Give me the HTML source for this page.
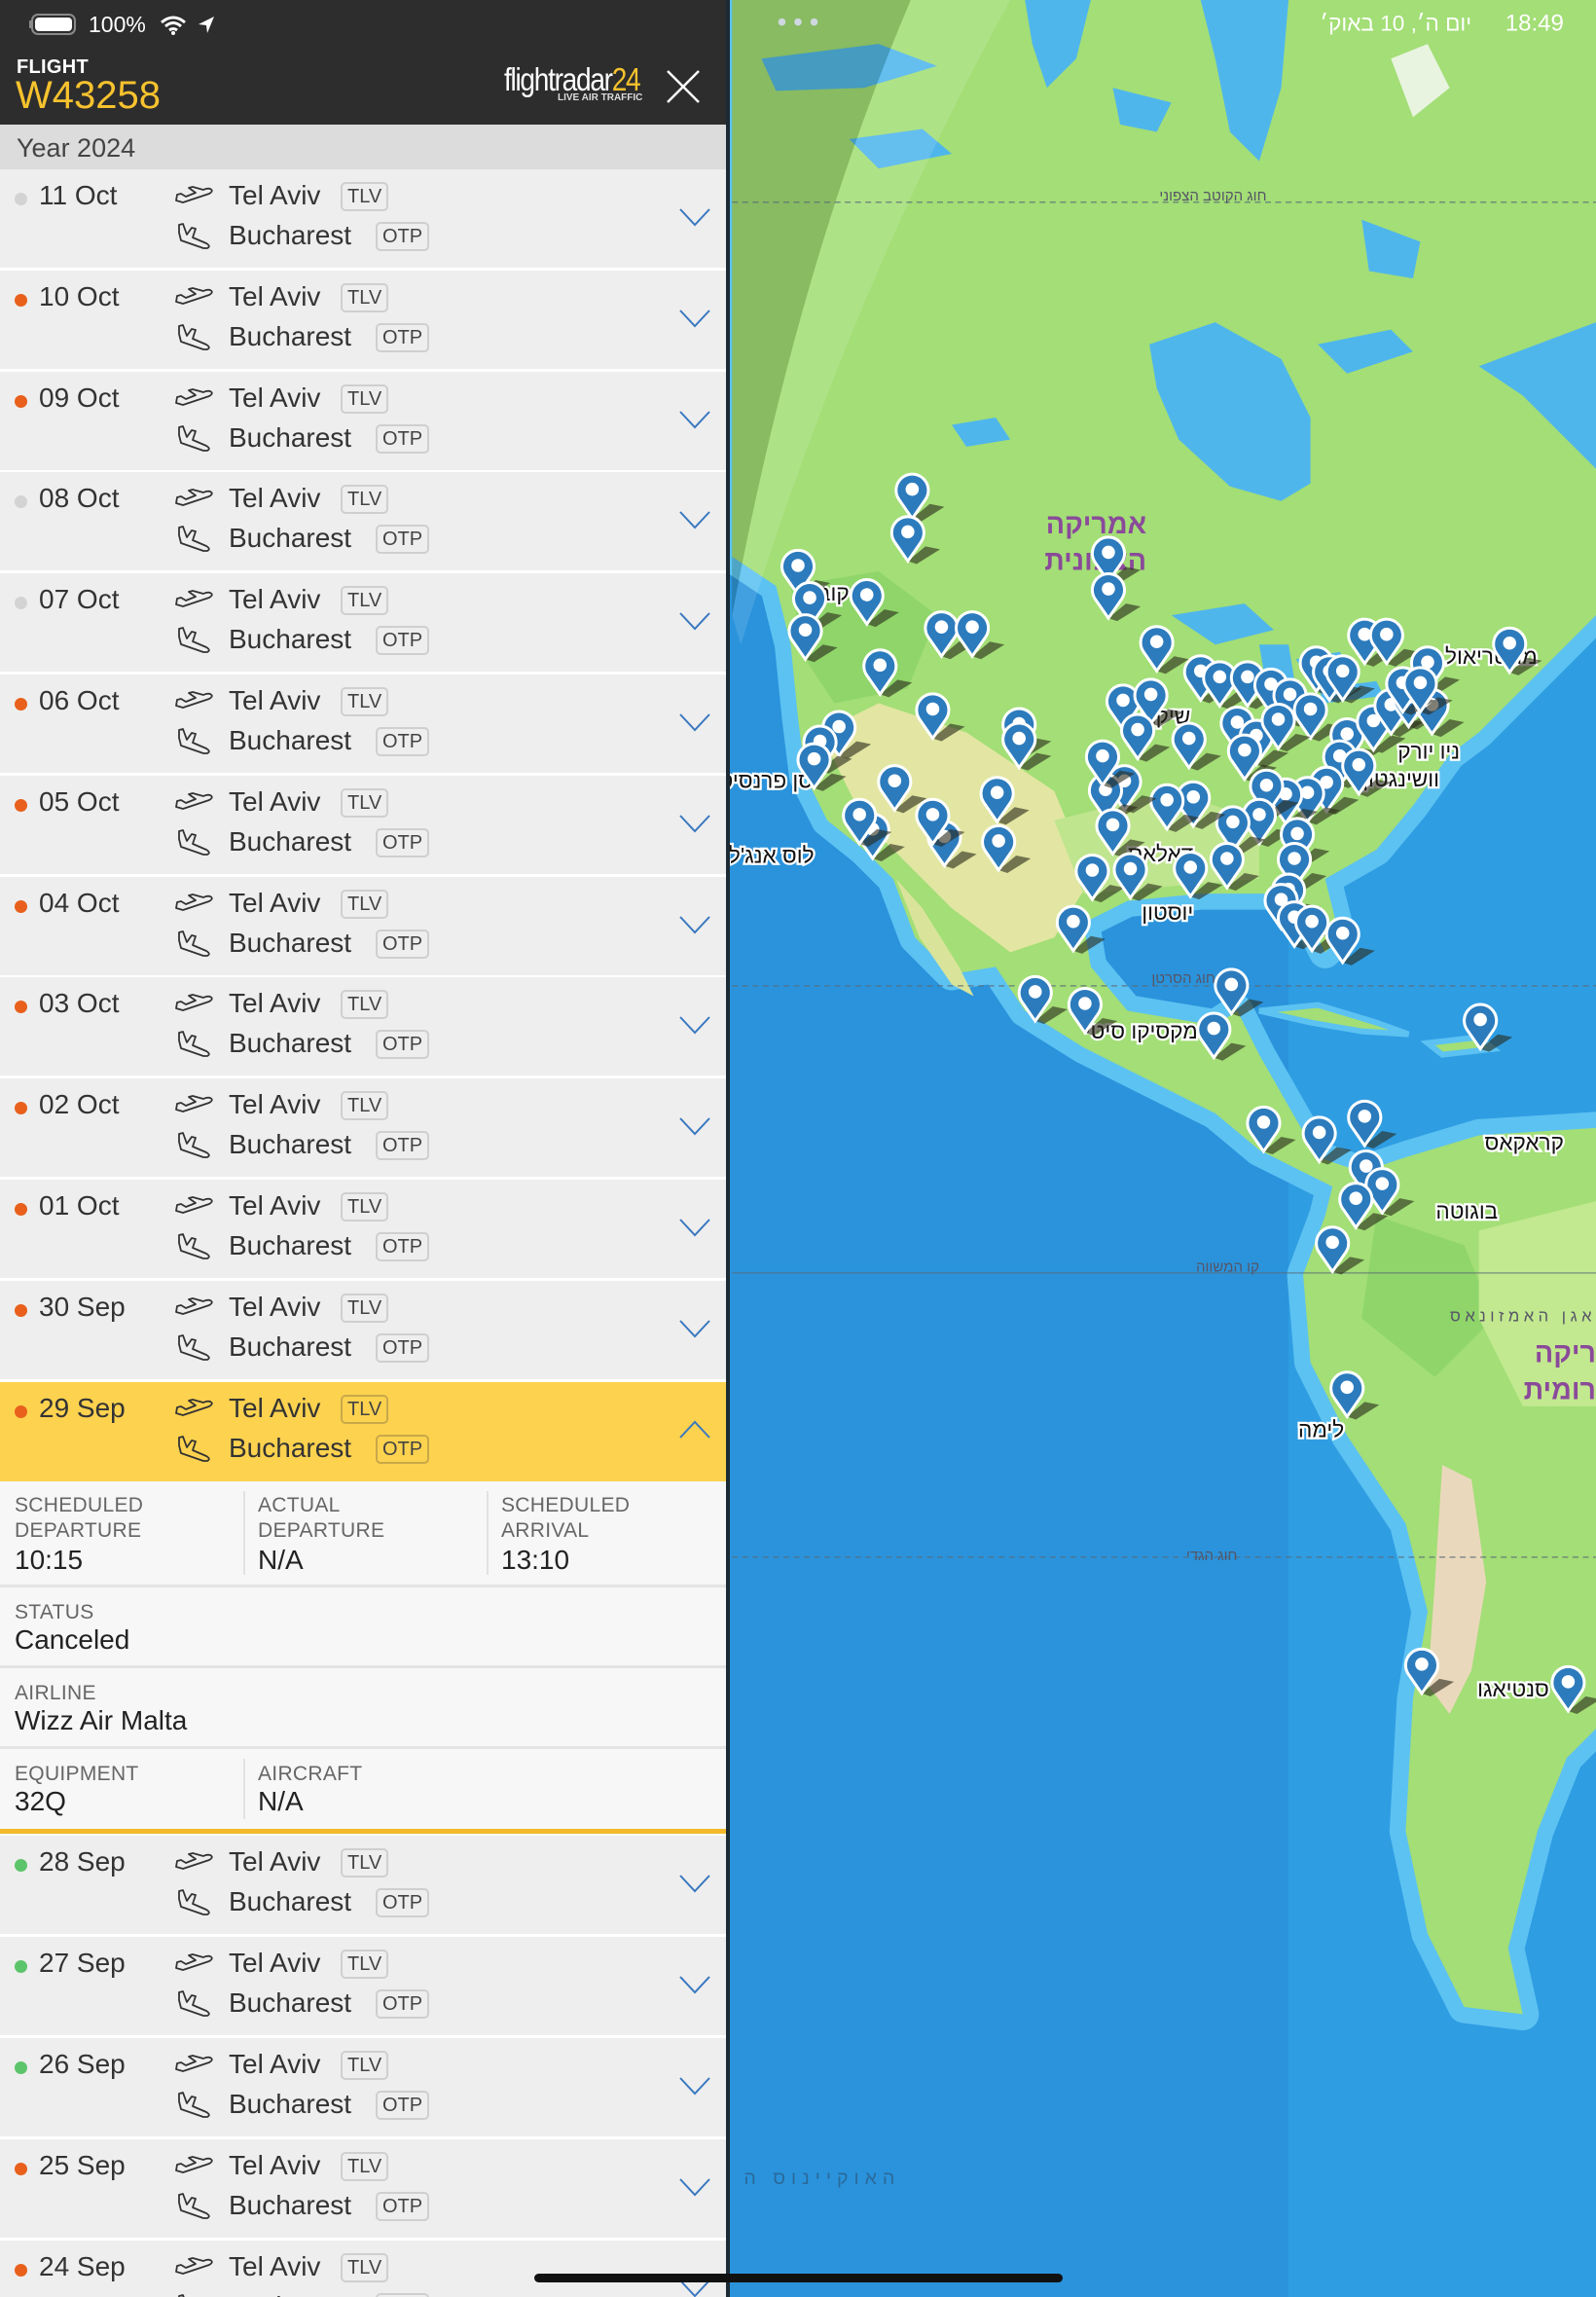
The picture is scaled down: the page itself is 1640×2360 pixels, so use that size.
<!DOCTYPE html>
<html><head><meta charset="utf-8">
<style>
*{margin:0;padding:0;box-sizing:border-box}
body{width:1640px;height:2360px;position:relative;overflow:hidden;font-family:"Liberation Sans","Noto Sans CJK JP",sans-serif;background:#2f9be0}
#map{position:absolute;left:0;top:0;width:1640px;height:2360px}
#panel{position:absolute;left:0;top:0;width:750px;height:2360px;background:#fff;overflow:hidden;border-right:4px solid #1b2a33}
.hdr{position:absolute;left:0;top:0;width:750px;height:128px;background:#2d2d2d;color:#fff}
.year{position:absolute;left:0;top:128px;width:750px;height:46px;background:#dcdcdc;color:#444;font-size:27px;padding:9px 0 0 17px}
.row{position:absolute;left:0;width:750px;height:101px;background:#eeeeee}
.row.hl{background:#fdd24f}
.dot{position:absolute;left:15px;top:24px;width:13px;height:13px;border-radius:50%}
.date{position:absolute;left:40px;top:11px;font-size:28px;color:#333}
.city{position:absolute;left:235px;font-size:28px;color:#333}
.c1{top:11px}.c2{top:52px}
.badge{position:absolute;height:30px;border:2px solid #cfcfcf;border-radius:5px;font-size:20px;color:#444;padding:2px 5px;background:transparent}
.hl .badge{border-color:#c9a84a}
.b1{left:350px;top:13px}.b2{left:386px;top:54px}
.ic{position:absolute}
.chev{position:absolute;left:697px;top:38px}
.det{position:absolute;left:0;width:750px;background:#f7f7f7}
.lab{position:absolute;font-size:21px;color:#666;line-height:26px;letter-spacing:.3px}
.val{position:absolute;font-size:28px;color:#222}
.vline{position:absolute;width:2px;background:#e2e2e2}
.hline{position:absolute;left:0;width:750px;height:3px;background:#e4e4e4}
</style></head><body>
<svg id="map" viewBox="0 0 1090 1568" preserveAspectRatio="none" xmlns="http://www.w3.org/2000/svg">
<defs>
<symbol id="pin" viewBox="0 0 24 32" style="overflow:visible">
<path d="M12,31 L24,21 L34,23 L18,33 Z" fill="rgba(40,40,25,0.6)"/>
<path d="M12,31 L3,18 A11,11 0 1 1 21,18 Z" fill="#2c7bbd" stroke="#fff" stroke-width="2"/>
<circle cx="12" cy="11" r="4.5" fill="#fff"/>
</symbol>
</defs>
<rect x="0" y="0" width="1090" height="1568" fill="#2a93dc"/>
<rect x="880" y="0" width="210" height="1568" fill="#2f9de2"/>
<g fill="#5cc2f2" stroke="#5cc2f2" stroke-width="22" stroke-linejoin="round">
<polygon points="500,0 1090,0 1090,420 1070,440 1040,470 1010,500 990,515 965,550 940,580 905,600 915,640 905,650 890,620 870,610 820,610 770,615 740,630 745,660 770,690 830,700 845,690 860,720 900,790 930,800 960,790 1010,775 1090,770 1090,1180 1070,1200 1050,1250 1030,1330 1040,1375 1000,1370 975,1320 960,1250 965,1160 975,1100 960,1040 920,980 895,930 890,870 905,830 910,810 890,800 860,785 830,760 790,740 740,715 700,690 680,660 650,665 625,640 610,600 590,580 565,560 550,530 545,490 540,440 530,400 500,380"/>
</g>
<polygon fill="#a3de76" points="500,0 1090,0 1090,420 1070,440 1040,470 1010,500 990,515 965,550 940,580 905,600 915,640 905,650 890,620 870,610 820,610 770,615 740,630 745,660 770,690 830,700 845,690 860,720 900,790 930,800 960,790 1010,775 1090,770 1090,1180 1070,1200 1050,1250 1030,1330 1040,1375 1000,1370 975,1320 960,1250 965,1160 975,1100 960,1040 920,980 895,930 890,870 905,830 910,810 890,800 860,785 830,760 790,740 740,715 700,690 680,660 650,665 625,640 610,600 590,580 565,560 550,530 545,490 540,440 530,400 500,380"/>
<polygon fill="#8fd56a" points="540,400 600,390 640,420 620,470 570,480 550,450"/>
<polygon fill="#8fd56a" points="940,830 1000,850 1020,900 980,940 930,900"/>
<polygon fill="#d9e49a" points="612,600 630,620 655,660 665,680 650,672 628,640"/>
<polygon fill="#a3de76" stroke="#5cc2f2" stroke-width="4" points="860,690 900,686 940,698 962,706 930,704 895,698"/>
<polygon fill="#a3de76" stroke="#5cc2f2" stroke-width="4" points="975,712 1010,708 1020,716 985,720"/>
<polygon fill="#e2e6a2" points="560,500 600,480 660,500 720,540 745,600 720,640 690,650 650,620 620,590 590,560"/>
<polygon fill="#bfe58e" points="720,560 800,540 860,560 860,600 800,605 740,610"/>
<polygon fill="#ead8bc" points="985,1000 1005,1010 1015,1080 1005,1140 990,1170 975,1150 980,1080"/>
<polygon fill="#c2e98f" points="1010,840 1090,820 1090,960 1040,960 1010,900"/>
<!-- arctic waters (smaller) -->
<polygon fill="#4fb6ec" points="520,40 600,30 640,45 590,60 530,62"/>
<polygon fill="#4fb6ec" points="700,0 745,0 735,40 715,60 705,30"/>
<polygon fill="#4fb6ec" points="820,0 880,0 875,60 860,110 840,90 830,40"/>
<polygon fill="#4fb6ec" points="580,95 630,88 650,105 600,115"/>
<polygon fill="#4fb6ec" points="1010,250 1090,220 1090,320 1070,300 1040,270"/>
<polygon fill="#4fb6ec" points="900,235 950,225 965,240 920,255"/>
<polygon fill="#4fb6ec" points="785,235 830,220 875,245 895,285 895,330 875,342 840,332 805,300 790,265"/>
<polygon fill="#4fb6ec" points="930,150 970,165 965,190 935,185"/>
<polygon fill="#4fb6ec" points="760,60 800,70 790,90 765,85"/>
<polygon fill="#e8f4e0" points="950,40 975,30 990,60 965,80"/>
<polygon fill="#4fb6ec" points="800,420 850,412 870,430 830,440"/>
<polygon fill="#4fb6ec" points="860,440 880,440 885,470 865,470"/>
<polygon fill="#4fb6ec" points="885,450 915,445 925,460 895,465"/>
<polygon fill="#4fb6ec" points="900,470 940,465 945,475 905,480"/>
<polygon fill="#4fb6ec" points="650,290 680,285 690,300 660,305"/>
<path d="M500,0 L622,0 Q545,180 500,420 Z" fill="rgba(30,50,20,0.2)"/>
<path d="M622,0 L690,0 Q580,200 506,440 L500,420 Q545,180 622,0 Z" fill="rgba(255,255,255,0.12)"/>
<g stroke="#5a6b78" stroke-width="1" stroke-dasharray="4,3" opacity=".7">
<line x1="500" y1="138" x2="1090" y2="138"/>
<line x1="500" y1="673" x2="1090" y2="673"/>
<line x1="500" y1="1063" x2="1090" y2="1063"/>
</g>
<line x1="500" y1="869" x2="1090" y2="869" stroke="#5a6b78" stroke-width="1" opacity=".6"/>
<g font-family="Liberation Sans,Noto Sans CJK JP,sans-serif" text-anchor="end">
<text x="865" y="137" font-size="10" fill="#556">חוג הקוטב הצפוני</text>
<text x="830" y="671" font-size="10" fill="#556">חוג הסרטן</text>
<text x="860" y="868" font-size="10" fill="#556">קו המשווה</text>
<text x="845" y="1065" font-size="10" fill="#556">חוג הגדי</text>
<text x="615" y="1491" font-size="13" fill="#2a6a9a" letter-spacing="4">האוקיינוס ה</text>
<text x="1090" y="902" font-size="11" fill="#556" letter-spacing="3">אגן האמזונאס</text>
<text x="783" y="364" font-size="19" font-weight="bold" fill="#8a4a9a">אמריקה</text>
<text x="783" y="389" font-size="19" font-weight="bold" fill="#8a4a9a">הצפונית</text>
<text x="1090" y="930" font-size="19" font-weight="bold" fill="#8a4a9a">ריקה</text>
<text x="1090" y="955" font-size="19" font-weight="bold" fill="#8a4a9a">רומית</text>
<g font-size="15" fill="#111" stroke="#fff" stroke-width="3" paint-order="stroke">
<text x="1050" y="453">מונטריאול</text>
<text x="997" y="518">ניו יורק</text>
<text x="983" y="537">וושינגטון</text>
<text x="813" y="494">שיקגו</text>
<text x="815" y="588">דאלאס</text>
<text x="815" y="628">יוסטון</text>
<text x="556" y="589">לוס אנג'לס</text>
<text x="555" y="538">סן פרנסיסקו</text>
<text x="818" y="709">מקסיקו סיטי</text>
<text x="1068" y="785">קראקאס</text>
<text x="1023" y="832">בוגוטה</text>
<text x="918" y="981">לימה</text>
<text x="1058" y="1158">סנטיאגו</text>
<text x="580" y="410">קובר</text>
</g>
</g>
<g id="pins">
<use href="#pin" x="611" y="323" width="24" height="32"/>
<use href="#pin" x="608" y="352" width="24" height="32"/>
<use href="#pin" x="533" y="375" width="24" height="32"/>
<use href="#pin" x="541" y="397" width="24" height="32"/>
<use href="#pin" x="538" y="419" width="24" height="32"/>
<use href="#pin" x="580" y="395" width="24" height="32"/>
<use href="#pin" x="631" y="417" width="24" height="32"/>
<use href="#pin" x="652" y="417" width="24" height="32"/>
<use href="#pin" x="589" y="443" width="24" height="32"/>
<use href="#pin" x="625" y="473" width="24" height="32"/>
<use href="#pin" x="745" y="366" width="24" height="32"/>
<use href="#pin" x="745" y="391" width="24" height="32"/>
<use href="#pin" x="778" y="427" width="24" height="32"/>
<use href="#pin" x="1019" y="428" width="24" height="32"/>
<use href="#pin" x="920" y="422" width="24" height="32"/>
<use href="#pin" x="935" y="422" width="24" height="32"/>
<use href="#pin" x="963" y="441" width="24" height="32"/>
<use href="#pin" x="887" y="441" width="24" height="32"/>
<use href="#pin" x="896" y="447" width="24" height="32"/>
<use href="#pin" x="905" y="447" width="24" height="32"/>
<use href="#pin" x="808" y="447" width="24" height="32"/>
<use href="#pin" x="821" y="451" width="24" height="32"/>
<use href="#pin" x="840" y="451" width="24" height="32"/>
<use href="#pin" x="856" y="456" width="24" height="32"/>
<use href="#pin" x="869" y="463" width="24" height="32"/>
<use href="#pin" x="883" y="473" width="24" height="32"/>
<use href="#pin" x="755" y="467" width="24" height="32"/>
<use href="#pin" x="774" y="463" width="24" height="32"/>
<use href="#pin" x="684" y="483" width="24" height="32"/>
<use href="#pin" x="684" y="493" width="24" height="32"/>
<use href="#pin" x="765" y="487" width="24" height="32"/>
<use href="#pin" x="800" y="493" width="24" height="32"/>
<use href="#pin" x="833" y="482" width="24" height="32"/>
<use href="#pin" x="846" y="491" width="24" height="32"/>
<use href="#pin" x="838" y="501" width="24" height="32"/>
<use href="#pin" x="861" y="480" width="24" height="32"/>
<use href="#pin" x="908" y="490" width="24" height="32"/>
<use href="#pin" x="926" y="481" width="24" height="32"/>
<use href="#pin" x="938" y="470" width="24" height="32"/>
<use href="#pin" x="950" y="465" width="24" height="32"/>
<use href="#pin" x="966" y="470" width="24" height="32"/>
<use href="#pin" x="946" y="455" width="24" height="32"/>
<use href="#pin" x="958" y="455" width="24" height="32"/>
<use href="#pin" x="903" y="505" width="24" height="32"/>
<use href="#pin" x="916" y="511" width="24" height="32"/>
<use href="#pin" x="894" y="523" width="24" height="32"/>
<use href="#pin" x="881" y="530" width="24" height="32"/>
<use href="#pin" x="866" y="531" width="24" height="32"/>
<use href="#pin" x="853" y="525" width="24" height="32"/>
<use href="#pin" x="848" y="545" width="24" height="32"/>
<use href="#pin" x="830" y="550" width="24" height="32"/>
<use href="#pin" x="826" y="575" width="24" height="32"/>
<use href="#pin" x="803" y="533" width="24" height="32"/>
<use href="#pin" x="785" y="535" width="24" height="32"/>
<use href="#pin" x="756" y="522" width="24" height="32"/>
<use href="#pin" x="743" y="528" width="24" height="32"/>
<use href="#pin" x="741" y="505" width="24" height="32"/>
<use href="#pin" x="748" y="552" width="24" height="32"/>
<use href="#pin" x="734" y="583" width="24" height="32"/>
<use href="#pin" x="760" y="582" width="24" height="32"/>
<use href="#pin" x="801" y="581" width="24" height="32"/>
<use href="#pin" x="874" y="558" width="24" height="32"/>
<use href="#pin" x="872" y="575" width="24" height="32"/>
<use href="#pin" x="868" y="596" width="24" height="32"/>
<use href="#pin" x="863" y="603" width="24" height="32"/>
<use href="#pin" x="872" y="615" width="24" height="32"/>
<use href="#pin" x="884" y="618" width="24" height="32"/>
<use href="#pin" x="905" y="626" width="24" height="32"/>
<use href="#pin" x="721" y="618" width="24" height="32"/>
<use href="#pin" x="669" y="530" width="24" height="32"/>
<use href="#pin" x="670" y="563" width="24" height="32"/>
<use href="#pin" x="633" y="560" width="24" height="32"/>
<use href="#pin" x="625" y="545" width="24" height="32"/>
<use href="#pin" x="599" y="522" width="24" height="32"/>
<use href="#pin" x="584" y="555" width="24" height="32"/>
<use href="#pin" x="575" y="545" width="24" height="32"/>
<use href="#pin" x="561" y="485" width="24" height="32"/>
<use href="#pin" x="548" y="495" width="24" height="32"/>
<use href="#pin" x="544" y="507" width="24" height="32"/>
<use href="#pin" x="695" y="666" width="24" height="32"/>
<use href="#pin" x="729" y="674" width="24" height="32"/>
<use href="#pin" x="829" y="661" width="24" height="32"/>
<use href="#pin" x="817" y="691" width="24" height="32"/>
<use href="#pin" x="999" y="685" width="24" height="32"/>
<use href="#pin" x="851" y="755" width="24" height="32"/>
<use href="#pin" x="889" y="762" width="24" height="32"/>
<use href="#pin" x="920" y="751" width="24" height="32"/>
<use href="#pin" x="921" y="785" width="24" height="32"/>
<use href="#pin" x="932" y="797" width="24" height="32"/>
<use href="#pin" x="914" y="807" width="24" height="32"/>
<use href="#pin" x="898" y="837" width="24" height="32"/>
<use href="#pin" x="908" y="936" width="24" height="32"/>
<use href="#pin" x="959" y="1125" width="24" height="32"/>
<use href="#pin" x="1059" y="1137" width="24" height="32"/>
</g>
<g fill="#cfd8e0"><circle cx="534" cy="15" r="2.5"/><circle cx="545" cy="15" r="2.5"/><circle cx="556" cy="15" r="2.5"/></g>
<text x="1068" y="21" font-family="Liberation Sans,sans-serif" font-size="16" fill="#fff" text-anchor="end">18:49</text>
<text x="1005" y="21" font-family="Liberation Sans,Noto Sans CJK JP,sans-serif" font-size="15" fill="#fff" text-anchor="end">יום ה׳, 10 באוק׳</text>
</svg>

<div id="panel">
<div class="hdr">
 <svg style="position:absolute;left:30px;top:13px" width="200" height="24" viewBox="0 0 200 24">
  <rect x="3" y="2" width="44" height="20" rx="6" fill="none" stroke="#8a8a8a" stroke-width="2"/>
  <rect x="6" y="5" width="38" height="14" rx="4" fill="#fff"/>
  <rect x="0" y="8" width="2" height="8" fill="#8a8a8a"/>
  <text x="61" y="20" font-family="Liberation Sans,sans-serif" font-size="23" fill="#fff">100%</text>
  <path d="M136,10 Q148,0 160,10 M140,14 Q148,7 156,14 M144,18 Q148,15 152,18" stroke="#fff" stroke-width="3" fill="none"/>
  <circle cx="148" cy="21" r="2" fill="#fff"/>
  <path d="M174,12 L190,4 L183,21 L182,13 Z" fill="#fff"/>
 </svg>
 <div style="position:absolute;left:17px;top:58px;font-size:20px;font-weight:bold;letter-spacing:.3px">FLIGHT</div>
 <div style="position:absolute;left:16px;top:76px;font-size:40px;color:#f6c22e">W43258</div>
 <div style="position:absolute;left:518px;top:64px;font-size:33px;letter-spacing:-1.5px;transform:scaleX(.85);transform-origin:left;line-height:36px">flightradar<span style="color:#f6c22e">24</span></div>
 <div style="position:absolute;left:573px;top:95px;font-size:10px;font-weight:bold;color:#ddd">LIVE AIR TRAFFIC</div>
 <svg style="position:absolute;left:684px;top:71px" width="36" height="36"><path d="M2,2 L34,34 M34,2 L2,34" stroke="#fff" stroke-width="2.5"/></svg>
</div>
<div class="year">Year 2024</div>

<svg width="0" height="0" style="position:absolute">
 <defs>
  <symbol id="to" viewBox="0 0 42 22"><path d="M2,15 L9,17 L36,8 Q41,5 37,3 Q34,2 30,4 L19,1 L15,2 L22,7 L12,11 L7,8 L3,9 Z" fill="none" stroke="#333" stroke-width="1.8" stroke-linejoin="round"/></symbol>
  <symbol id="la" viewBox="0 0 38 28"><path d="M3,2 L7,1 L11,12 L16,5 L20,6 L17,15 L31,21 Q36,24 32,26 L28,26 L5,18 L3,10 Z" fill="none" stroke="#333" stroke-width="1.8" stroke-linejoin="round"/></symbol>
  <symbol id="cd" viewBox="0 0 34 22"><path d="M2,3 L17,19 L32,3" fill="none" stroke="#3a78c0" stroke-width="2"/></symbol>
  <symbol id="cu" viewBox="0 0 34 22"><path d="M2,19 L17,3 L32,19" fill="none" stroke="#3a78c0" stroke-width="2"/></symbol>
 </defs>
</svg>

<div class="row" style="top:174px"><div class="dot" style="background:#d3d3d3"></div><div class="date">11 Oct</div><svg class="ic" style="left:179px;top:17px" width="42" height="22"><use href="#to"/></svg><svg class="ic" style="left:181px;top:55px" width="38" height="28"><use href="#la"/></svg><div class="city c1">Tel Aviv</div><div class="badge b1">TLV</div><div class="city c2">Bucharest</div><div class="badge b2">OTP</div><svg class="chev" width="34" height="22"><use href="#cd"/></svg></div>
<div class="row" style="top:278px"><div class="dot" style="background:#e8601c"></div><div class="date">10 Oct</div><svg class="ic" style="left:179px;top:17px" width="42" height="22"><use href="#to"/></svg><svg class="ic" style="left:181px;top:55px" width="38" height="28"><use href="#la"/></svg><div class="city c1">Tel Aviv</div><div class="badge b1">TLV</div><div class="city c2">Bucharest</div><div class="badge b2">OTP</div><svg class="chev" width="34" height="22"><use href="#cd"/></svg></div>
<div class="row" style="top:382px"><div class="dot" style="background:#e8601c"></div><div class="date">09 Oct</div><svg class="ic" style="left:179px;top:17px" width="42" height="22"><use href="#to"/></svg><svg class="ic" style="left:181px;top:55px" width="38" height="28"><use href="#la"/></svg><div class="city c1">Tel Aviv</div><div class="badge b1">TLV</div><div class="city c2">Bucharest</div><div class="badge b2">OTP</div><svg class="chev" width="34" height="22"><use href="#cd"/></svg></div>
<div class="row" style="top:485px"><div class="dot" style="background:#d3d3d3"></div><div class="date">08 Oct</div><svg class="ic" style="left:179px;top:17px" width="42" height="22"><use href="#to"/></svg><svg class="ic" style="left:181px;top:55px" width="38" height="28"><use href="#la"/></svg><div class="city c1">Tel Aviv</div><div class="badge b1">TLV</div><div class="city c2">Bucharest</div><div class="badge b2">OTP</div><svg class="chev" width="34" height="22"><use href="#cd"/></svg></div>
<div class="row" style="top:589px"><div class="dot" style="background:#d3d3d3"></div><div class="date">07 Oct</div><svg class="ic" style="left:179px;top:17px" width="42" height="22"><use href="#to"/></svg><svg class="ic" style="left:181px;top:55px" width="38" height="28"><use href="#la"/></svg><div class="city c1">Tel Aviv</div><div class="badge b1">TLV</div><div class="city c2">Bucharest</div><div class="badge b2">OTP</div><svg class="chev" width="34" height="22"><use href="#cd"/></svg></div>
<div class="row" style="top:693px"><div class="dot" style="background:#e8601c"></div><div class="date">06 Oct</div><svg class="ic" style="left:179px;top:17px" width="42" height="22"><use href="#to"/></svg><svg class="ic" style="left:181px;top:55px" width="38" height="28"><use href="#la"/></svg><div class="city c1">Tel Aviv</div><div class="badge b1">TLV</div><div class="city c2">Bucharest</div><div class="badge b2">OTP</div><svg class="chev" width="34" height="22"><use href="#cd"/></svg></div>
<div class="row" style="top:797px"><div class="dot" style="background:#e8601c"></div><div class="date">05 Oct</div><svg class="ic" style="left:179px;top:17px" width="42" height="22"><use href="#to"/></svg><svg class="ic" style="left:181px;top:55px" width="38" height="28"><use href="#la"/></svg><div class="city c1">Tel Aviv</div><div class="badge b1">TLV</div><div class="city c2">Bucharest</div><div class="badge b2">OTP</div><svg class="chev" width="34" height="22"><use href="#cd"/></svg></div>
<div class="row" style="top:901px"><div class="dot" style="background:#e8601c"></div><div class="date">04 Oct</div><svg class="ic" style="left:179px;top:17px" width="42" height="22"><use href="#to"/></svg><svg class="ic" style="left:181px;top:55px" width="38" height="28"><use href="#la"/></svg><div class="city c1">Tel Aviv</div><div class="badge b1">TLV</div><div class="city c2">Bucharest</div><div class="badge b2">OTP</div><svg class="chev" width="34" height="22"><use href="#cd"/></svg></div>
<div class="row" style="top:1004px"><div class="dot" style="background:#e8601c"></div><div class="date">03 Oct</div><svg class="ic" style="left:179px;top:17px" width="42" height="22"><use href="#to"/></svg><svg class="ic" style="left:181px;top:55px" width="38" height="28"><use href="#la"/></svg><div class="city c1">Tel Aviv</div><div class="badge b1">TLV</div><div class="city c2">Bucharest</div><div class="badge b2">OTP</div><svg class="chev" width="34" height="22"><use href="#cd"/></svg></div>
<div class="row" style="top:1108px"><div class="dot" style="background:#e8601c"></div><div class="date">02 Oct</div><svg class="ic" style="left:179px;top:17px" width="42" height="22"><use href="#to"/></svg><svg class="ic" style="left:181px;top:55px" width="38" height="28"><use href="#la"/></svg><div class="city c1">Tel Aviv</div><div class="badge b1">TLV</div><div class="city c2">Bucharest</div><div class="badge b2">OTP</div><svg class="chev" width="34" height="22"><use href="#cd"/></svg></div>
<div class="row" style="top:1212px"><div class="dot" style="background:#e8601c"></div><div class="date">01 Oct</div><svg class="ic" style="left:179px;top:17px" width="42" height="22"><use href="#to"/></svg><svg class="ic" style="left:181px;top:55px" width="38" height="28"><use href="#la"/></svg><div class="city c1">Tel Aviv</div><div class="badge b1">TLV</div><div class="city c2">Bucharest</div><div class="badge b2">OTP</div><svg class="chev" width="34" height="22"><use href="#cd"/></svg></div>
<div class="row" style="top:1316px"><div class="dot" style="background:#e8601c"></div><div class="date">30 Sep</div><svg class="ic" style="left:179px;top:17px" width="42" height="22"><use href="#to"/></svg><svg class="ic" style="left:181px;top:55px" width="38" height="28"><use href="#la"/></svg><div class="city c1">Tel Aviv</div><div class="badge b1">TLV</div><div class="city c2">Bucharest</div><div class="badge b2">OTP</div><svg class="chev" width="34" height="22"><use href="#cd"/></svg></div>
<div class="row hl" style="top:1420px;height:102px"><div class="dot" style="background:#e8601c"></div><div class="date">29 Sep</div><svg class="ic" style="left:179px;top:17px" width="42" height="22"><use href="#to"/></svg><svg class="ic" style="left:181px;top:55px" width="38" height="28"><use href="#la"/></svg><div class="city c1">Tel Aviv</div><div class="badge b1">TLV</div><div class="city c2">Bucharest</div><div class="badge b2">OTP</div><svg class="chev" width="34" height="22"><use href="#cu"/></svg></div>

<div class="det" style="top:1522px;height:358px">
 <div class="lab" style="left:15px;top:12px">SCHEDULED<br>DEPARTURE</div>
 <div class="val" style="left:15px;top:65px">10:15</div>
 <div class="vline" style="left:250px;top:10px;height:86px"></div>
 <div class="lab" style="left:265px;top:12px">ACTUAL<br>DEPARTURE</div>
 <div class="val" style="left:265px;top:65px">N/A</div>
 <div class="vline" style="left:500px;top:10px;height:86px"></div>
 <div class="lab" style="left:515px;top:12px">SCHEDULED<br>ARRIVAL</div>
 <div class="val" style="left:515px;top:65px">13:10</div>
 <div class="hline" style="top:106px"></div>
 <div class="lab" style="left:15px;top:122px">STATUS</div>
 <div class="val" style="left:15px;top:147px">Canceled</div>
 <div class="hline" style="top:189px"></div>
 <div class="lab" style="left:15px;top:205px">AIRLINE</div>
 <div class="val" style="left:15px;top:230px">Wizz Air Malta</div>
 <div class="hline" style="top:272px"></div>
 <div class="lab" style="left:15px;top:288px">EQUIPMENT</div>
 <div class="val" style="left:15px;top:313px">32Q</div>
 <div class="vline" style="left:250px;top:285px;height:62px"></div>
 <div class="lab" style="left:265px;top:288px">AIRCRAFT</div>
 <div class="val" style="left:265px;top:313px">N/A</div>
</div>
<div style="position:absolute;left:0;top:1879px;width:750px;height:5px;background:#f2b92a"></div>

<div class="row" style="top:1886px"><div class="dot" style="background:#5cc46a"></div><div class="date">28 Sep</div><svg class="ic" style="left:179px;top:17px" width="42" height="22"><use href="#to"/></svg><svg class="ic" style="left:181px;top:55px" width="38" height="28"><use href="#la"/></svg><div class="city c1">Tel Aviv</div><div class="badge b1">TLV</div><div class="city c2">Bucharest</div><div class="badge b2">OTP</div><svg class="chev" width="34" height="22"><use href="#cd"/></svg></div>
<div class="row" style="top:1990px"><div class="dot" style="background:#5cc46a"></div><div class="date">27 Sep</div><svg class="ic" style="left:179px;top:17px" width="42" height="22"><use href="#to"/></svg><svg class="ic" style="left:181px;top:55px" width="38" height="28"><use href="#la"/></svg><div class="city c1">Tel Aviv</div><div class="badge b1">TLV</div><div class="city c2">Bucharest</div><div class="badge b2">OTP</div><svg class="chev" width="34" height="22"><use href="#cd"/></svg></div>
<div class="row" style="top:2094px"><div class="dot" style="background:#5cc46a"></div><div class="date">26 Sep</div><svg class="ic" style="left:179px;top:17px" width="42" height="22"><use href="#to"/></svg><svg class="ic" style="left:181px;top:55px" width="38" height="28"><use href="#la"/></svg><div class="city c1">Tel Aviv</div><div class="badge b1">TLV</div><div class="city c2">Bucharest</div><div class="badge b2">OTP</div><svg class="chev" width="34" height="22"><use href="#cd"/></svg></div>
<div class="row" style="top:2198px"><div class="dot" style="background:#e8601c"></div><div class="date">25 Sep</div><svg class="ic" style="left:179px;top:17px" width="42" height="22"><use href="#to"/></svg><svg class="ic" style="left:181px;top:55px" width="38" height="28"><use href="#la"/></svg><div class="city c1">Tel Aviv</div><div class="badge b1">TLV</div><div class="city c2">Bucharest</div><div class="badge b2">OTP</div><svg class="chev" width="34" height="22"><use href="#cd"/></svg></div>
<div class="row" style="top:2302px"><div class="dot" style="background:#e8601c"></div><div class="date">24 Sep</div><svg class="ic" style="left:179px;top:17px" width="42" height="22"><use href="#to"/></svg><svg class="ic" style="left:181px;top:55px" width="38" height="28"><use href="#la"/></svg><div class="city c1">Tel Aviv</div><div class="badge b1">TLV</div><div class="city c2">Bucharest</div><div class="badge b2">OTP</div><svg class="chev" width="34" height="22"><use href="#cd"/></svg></div>
</div>
<div style="position:absolute;left:549px;top:2336px;width:543px;height:9px;border-radius:5px;background:#111"></div>
</body></html>
